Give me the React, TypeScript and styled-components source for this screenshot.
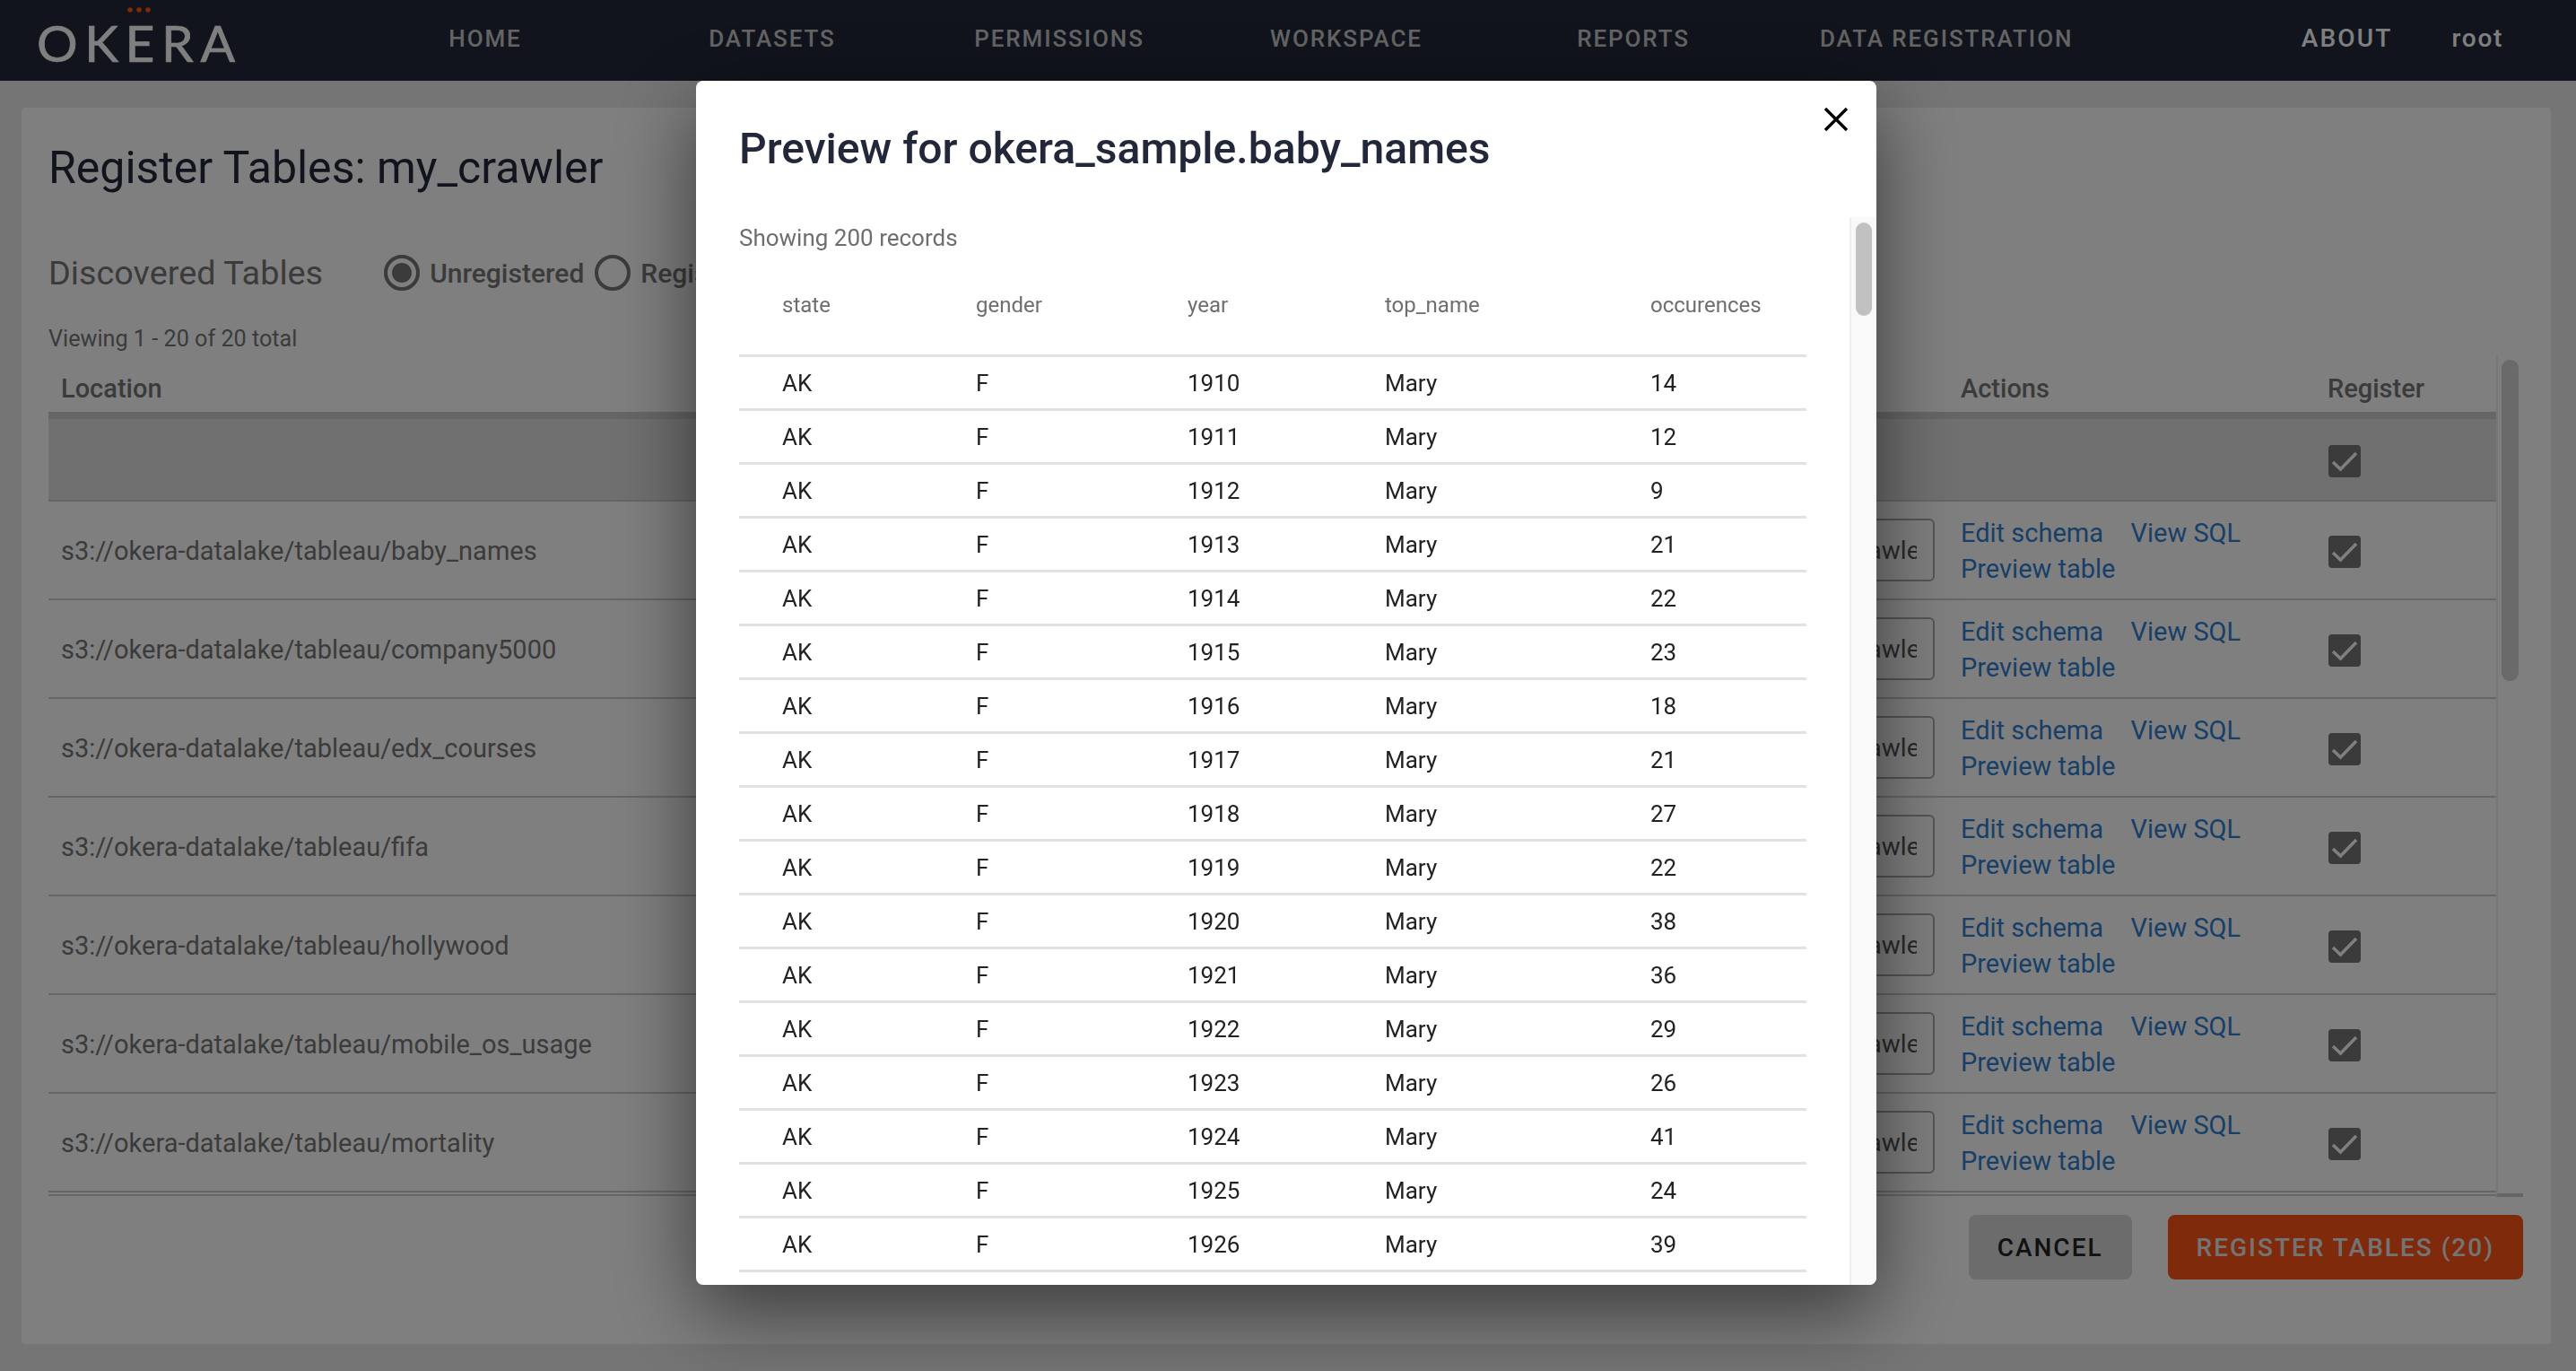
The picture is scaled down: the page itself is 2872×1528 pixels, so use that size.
import React from "react";
import styled, { createGlobalStyle } from "styled-components";

const Global = createGlobalStyle`
  html, body { margin: 0; padding: 0; height: 100%; background: #eaeaea; }
  body { font-family: Roboto, "Liberation Sans", sans-serif; overflow: hidden; }
  #root { height: 1528px; }
  * { box-sizing: border-box; }
`;

const Page = styled.div`
  height: 1528px;
  display: flex;
  flex-direction: column;
  overflow: hidden;
`;

const TopBar = styled.header`
  height: 90px;
  flex: none;
  background: #222839;
  display: flex;
  align-items: center;
  padding-left: 41px;
`;

const Logo = styled.div`
  position: relative;
  width: 340px;
  flex: none;
  font-family: Lato, sans-serif;
  font-weight: 400;
  font-size: 57px;
  line-height: 46px;
  letter-spacing: 7.6px;
  color: #fff;
  -webkit-text-stroke: 0.7px #fff;
  padding-top: 3px;
`;

const LogoDots = styled.svg`
  position: absolute;
  left: 100px;
  top: -14px;
`;

const Nav = styled.nav`
  display: flex;
  flex: 1;
  height: 100%;
`;

const NavItem = styled.a`
  min-width: 320px;
  padding: 0 48px 5px;
  display: flex;
  align-items: center;
  justify-content: center;
  font-size: 26px;
  font-weight: 500;
  letter-spacing: 1.9px;
  color: #c8c8c8;
`;

const TopRight = styled.div`
  display: flex;
  align-items: center;
  gap: 66px;
  padding-right: 81px;
  padding-bottom: 6px;
`;

const TopRightItem = styled.a<{ $spaced?: boolean }>`
  font-size: 28px;
  font-weight: 500;
  letter-spacing: ${(p) => (p.$spaced ? "2.2px" : "1.7px")};
  color: #fff;
`;

const Main = styled.main`
  flex: 1;
  padding: 30px 28px 30px 24px;
  display: flex;
  min-height: 0;
`;

const Card = styled.section`
  flex: 1;
  background: #fff;
  border-radius: 4px;
  padding: 36px 31px 0 30px;
  display: flex;
  flex-direction: column;
  min-width: 0;
`;

const PageTitle = styled.h1`
  margin: 0;
  font-size: 50px;
  line-height: 62px;
  font-weight: 400;
  color: #222839;
`;

const FilterRow = styled.div`
  margin-top: 62px;
  display: flex;
  align-items: center;
  height: 48px;
`;

const SubTitle = styled.h2`
  margin: 0 68px 0 0;
  font-size: 37.8px;
  font-weight: 400;
  color: #777;
`;

const RadioLabel = styled.label`
  display: flex;
  align-items: center;
  gap: 11px;
  margin-right: 12px;
  font-size: 30px;
  font-weight: 500;
  color: #777;
`;

const RadioRing = styled.span<{ $on?: boolean }>`
  width: 40px;
  height: 40px;
  border-radius: 50%;
  border: 4px solid #777;
  display: flex;
  align-items: center;
  justify-content: center;
  &::after {
    content: "";
    width: 22px;
    height: 22px;
    border-radius: 50%;
    background: ${(p) => (p.$on ? "#777" : "transparent")};
  }
`;

const Viewing = styled.div`
  margin-top: 33px;
  font-size: 25.2px;
  line-height: 34px;
  color: #777;
`;

const TableWrap = styled.div`
  display: flex;
  height: 939px;
`;

const Table = styled.div`
  flex: 1;
  min-width: 0;
  display: flex;
  flex-direction: column;
`;

const Grid = styled.div`
  display: grid;
  grid-template-columns: 1846px 286px 409px 190px;
  width: 2731px;
  align-items: center;
`;

const HeadRow = styled(Grid)`
  height: 72px;
  padding-top: 12px;
  border-bottom: 8px solid #ccc;
`;

const HeadCell = styled.div`
  padding-left: 14px;
  font-size: 29px;
  font-weight: 500;
  color: #777;
  &:nth-child(n + 3) { padding-left: 0; }
`;

const AllRow = styled(Grid)`
  height: 92px;
  background: #e0e0e0;
  border-bottom: 2px solid #ccc;
`;

const Row = styled(Grid)`
  height: 110px;
  border-bottom: 2px solid #ccc;
`;

const LocationCell = styled.div`
  padding: 2px 0 0 14px;
  font-size: 29px;
  color: #777;
`;

const CrawlerBox = styled.div`
  width: 247px;
  height: 70px;
  margin-left: 10px;
  border: 2px solid #aaa;
  border-radius: 6px;
  padding: 0 18px;
  display: flex;
  align-items: center;
  font-size: 28px;
  color: #555;
`;

const BoxText = styled.span`
  display: flex;
  justify-content: flex-end;
  overflow: hidden;
  white-space: nowrap;
  width: 100%;
`;

const BoxInner = styled.span`
  flex: none;
  margin-right: -13px;
`;

const Actions = styled.div`
  display: grid;
  grid-template-columns: auto 1fr;
  column-gap: 17px;
  padding-top: 1px;
  font-size: 29px;
  line-height: 40px;
  color: #2f7fd0;
`;

const Check = styled.div`
  width: 36px;
  height: 36px;
  margin: 3px 0 0 1px;
  border-radius: 4px;
  background: #777;
  display: flex;
`;

const TableEnd = styled.div`
  border-top: 2px solid #ccc;
  margin-top: 2px;
`;

const Track = styled.div`
  width: 30px;
  flex: none;
  border-left: 2px solid #eee;
  border-bottom: 4px solid #ccc;
  padding: 6px 5px 0 4px;
`;

const Thumb = styled.div<{ $h: number }>`
  height: ${(p) => p.$h}px;
  border-radius: 9px;
  background: #d4d4d4;
`;

const Footer = styled.div`
  margin-top: 20px;
  display: flex;
  justify-content: flex-end;
  gap: 40px;
`;

const Btn = styled.button<{ $primary?: boolean }>`
  height: 72px;
  border: 0;
  border-radius: 8px;
  padding: 0 32px;
  font-family: inherit;
  font-size: 28px;
  font-weight: 500;
  letter-spacing: 2px;
  background: ${(p) => (p.$primary ? "#ff5414" : "#d9d9d9")};
  color: ${(p) => (p.$primary ? "#e8e8e8" : "#222")};
`;

const Backdrop = styled.div`
  position: fixed;
  inset: 0;
  background: rgba(0, 0, 0, 0.5);
  padding: 90px 0 0 776px;
`;

const Modal = styled.div`
  width: 1316px;
  height: 1342px;
  background: #fff;
  border-radius: 8px;
  box-shadow: 0 30px 90px rgba(0, 0, 0, 0.55);
  position: relative;
  display: flex;
  flex-direction: column;
  overflow: hidden;
`;

const ModalTitle = styled.h2`
  margin: 0;
  padding: 46px 48px 0;
  height: 152px;
  flex: none;
  font-size: 48.1px;
  line-height: 60px;
  font-weight: 500;
  color: #222839;
`;

const Close = styled.button`
  position: absolute;
  top: 28px;
  right: 30px;
  width: 30px;
  height: 30px;
  padding: 0;
  border: 0;
  background: none;
  display: flex;
`;

const ModalScroll = styled.div`
  flex: 1;
  display: flex;
  min-height: 0;
`;

const ModalBody = styled.div`
  flex: 1;
  padding: 0 48px;
  overflow: hidden;
`;

const Showing = styled.div`
  height: 47px;
  padding-top: 4px;
  font-size: 26px;
  line-height: 38px;
  color: #6e6e6e;
`;

const PreviewGrid = styled.div`
  display: grid;
  grid-template-columns: 216px 236px 220px 296px 222px;
  width: 1190px;
  align-items: center;
`;

const PreviewHead = styled(PreviewGrid)`
  height: 109px;
  padding-bottom: 4px;
  border-bottom: 3px solid #e2e2e2;
`;

const PreviewHeadCell = styled.div`
  padding-left: 48px;
  font-size: 24px;
  color: #6e6e6e;
`;

const PreviewRow = styled(PreviewGrid)`
  height: 60px;
  border-bottom: 3px solid #e2e2e2;
`;

const PreviewCell = styled.div`
  padding-left: 48px;
  font-size: 26px;
  color: #222;
`;

const ModalTrack = styled.div`
  width: 30px;
  flex: none;
  background: #f9f9f9;
  border-left: 2px solid #eee;
  padding: 6px 5px 0 5px;
`;

const ModalThumb = styled.div`
  height: 104px;
  border-radius: 9px;
  background: #c1c1c1;
`;

const locations = ["baby_names", "company5000", "edx_courses", "fifa", "hollywood", "mobile_os_usage", "mortality"];
const occurrences = [14, 12, 9, 21, 22, 23, 18, 21, 27, 22, 38, 36, 29, 26, 41, 24, 39];

const CheckMark = () => (
  <svg width="36" height="36" viewBox="0 0 36 36" fill="none" stroke="#fff" strokeWidth="3.5">
    <path d="M5 19l8.500 8L31 9" />
  </svg>
);

export default function App() {
  return (
    <Page>
      <Global />
      <TopBar>
        <Logo>
          OKERA
          <LogoDots width="28" height="8" viewBox="0 0 28 8">
            <circle cx="4" cy="4" r="2.8" fill="#ff5414" />
            <circle cx="14" cy="4" r="2.8" fill="#ff5414" />
            <circle cx="24" cy="4" r="2.8" fill="#ff5414" />
          </LogoDots>
        </Logo>
        <Nav>
          {["HOME", "DATASETS", "PERMISSIONS", "WORKSPACE", "REPORTS", "DATA REGISTRATION"].map((n) => (
            <NavItem key={n}>{n}</NavItem>
          ))}
        </Nav>
        <TopRight>
          <TopRightItem $spaced>ABOUT</TopRightItem>
          <TopRightItem>root</TopRightItem>
        </TopRight>
      </TopBar>
      <Main>
        <Card>
          <PageTitle>Register Tables: my_crawler</PageTitle>
          <FilterRow>
            <SubTitle>Discovered Tables</SubTitle>
            <RadioLabel>
              <RadioRing $on />
              Unregistered
            </RadioLabel>
            <RadioLabel>
              <RadioRing />
              Registered
            </RadioLabel>
          </FilterRow>
          <Viewing>Viewing 1 - 20 of 20 total</Viewing>
          <TableWrap>
            <Table>
              <HeadRow>
                <HeadCell>Location</HeadCell>
                <HeadCell>Name</HeadCell>
                <HeadCell>Actions</HeadCell>
                <HeadCell>Register</HeadCell>
              </HeadRow>
              <AllRow>
                <div />
                <div />
                <div />
                <Check>
                  <CheckMark />
                </Check>
              </AllRow>
              {locations.map((l) => (
                <Row key={l}>
                  <LocationCell>s3://okera-datalake/tableau/{l}</LocationCell>
                  <CrawlerBox>
                    <BoxText>
                      <BoxInner>my_crawler</BoxInner>
                    </BoxText>
                  </CrawlerBox>
                  <Actions>
                    <span>Edit schema</span>
                    <span>View SQL</span>
                    <span>Preview table</span>
                  </Actions>
                  <Check>
                    <CheckMark />
                  </Check>
                </Row>
              ))}
              <TableEnd />
            </Table>
            <Track>
              <Thumb $h={358} />
            </Track>
          </TableWrap>
          <Footer>
            <Btn>CANCEL</Btn>
            <Btn $primary>REGISTER TABLES (20)</Btn>
          </Footer>
        </Card>
      </Main>
      <Backdrop>
        <Modal>
          <ModalTitle>Preview for okera_sample.baby_names</ModalTitle>
          <Close aria-label="Close">
            <svg width="30" height="30" viewBox="0 0 30 30" fill="none" stroke="#000" strokeWidth="3.4">
              <path d="M3 3l24 24M27 3L3 27" />
            </svg>
          </Close>
          <ModalScroll>
            <ModalBody>
              <Showing>Showing 200 records</Showing>
              <PreviewHead>
                {["state", "gender", "year", "top_name", "occurences"].map((h) => (
                  <PreviewHeadCell key={h}>{h}</PreviewHeadCell>
                ))}
              </PreviewHead>
              {occurrences.map((o, i) => (
                <PreviewRow key={i}>
                  <PreviewCell>AK</PreviewCell>
                  <PreviewCell>F</PreviewCell>
                  <PreviewCell>{1910 + i}</PreviewCell>
                  <PreviewCell>Mary</PreviewCell>
                  <PreviewCell>{o}</PreviewCell>
                </PreviewRow>
              ))}
            </ModalBody>
            <ModalTrack>
              <ModalThumb />
            </ModalTrack>
          </ModalScroll>
        </Modal>
      </Backdrop>
    </Page>
  );
}
